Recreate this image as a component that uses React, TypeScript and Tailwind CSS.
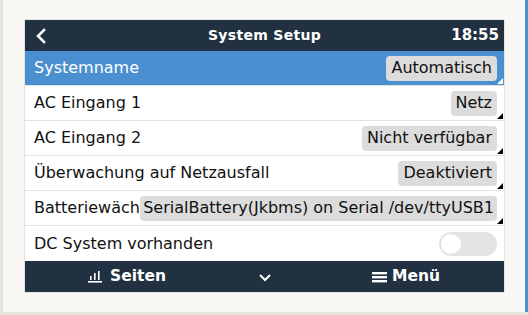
import React from 'react'

const font = { fontFamily: '"DejaVu Sans", "Liberation Sans", sans-serif' }

type Row = { label: string; value?: string; selected?: boolean; toggle?: boolean; clip?: boolean }

const rows: Row[] = [
  { label: 'Systemname', value: 'Automatisch', selected: true },
  { label: 'AC Eingang 1', value: 'Netz' },
  { label: 'AC Eingang 2', value: 'Nicht verfügbar' },
  { label: 'Überwachung auf Netzausfall', value: 'Deaktiviert' },
  { label: 'Batteriewächter', value: 'SerialBattery(Jkbms) on Serial /dev/ttyUSB1', clip: true },
  { label: 'DC System vorhanden', toggle: true },
]

function Corner({ white }: { white?: boolean }) {
  return (
    <svg className="absolute right-[1px] bottom-[1px]" width="6" height="6" viewBox="0 0 6 6">
      <polygon points="6,0 6,6 0,6" fill={white ? '#ffffff' : '#000000'} />
    </svg>
  )
}

function SettingRow({ row, last }: { row: Row; last: boolean }) {
  return (
    <div
      className={`relative h-[35px] flex items-center pl-[9px] pr-[7px] ${
        row.selected ? 'bg-[#4a8fd0] text-white' : 'bg-white text-[#111]'
      } ${last ? '' : 'border-b border-[#e2e2e2]'}`}
    >
      <div className={`text-[16px] whitespace-nowrap ${row.clip ? 'flex-1 min-w-0 overflow-hidden' : 'flex-1'}`}>
        {row.label}
      </div>
      {row.value && (
        <div
          className={`shrink-0 h-[25px] flex items-center rounded-[4px] bg-[#dcdcdc] text-[#111] text-[16px] whitespace-nowrap ${
            row.clip ? 'px-[3px]' : 'ml-[2px] px-[5px]'
          }`}
        >
          {row.value}
        </div>
      )}
      {row.toggle && (
        <div className="w-[58px] h-[24px] rounded-full bg-[#e3e3e3] flex items-center px-[2px]">
          <div className="w-[20px] h-[20px] rounded-full bg-white" />
        </div>
      )}
      {row.value && <Corner white={row.selected} />}
    </div>
  )
}

export default function App() {
  return (
    <div className="w-[528px] h-[315px] bg-[#e3e3df] flex flex-col" style={font}>
      <div className="flex h-[312px]">
        <div className="w-[3px]" />
        <div className="flex-1 bg-[#f8f7f3] rounded-bl-[3px] pt-[19px] pl-[21px]">
          <div className="w-[481px] border border-[#e4e4e2] bg-white">
            {/* header */}
            <div className="h-[31px] bg-[#223141] text-white flex items-center relative">
              <svg className="ml-[10px]" width="12" height="16" viewBox="0 0 12 16">
                <polyline points="9,2 3,8 9,14" fill="none" stroke="#fff" strokeWidth="2.6" strokeLinecap="square" />
              </svg>
              <div className="absolute left-0 right-0 text-center font-bold text-[14px] tracking-[0.3px]">System Setup</div>
              <div className="ml-auto mr-[5px] font-bold text-[15px]">18:55</div>
            </div>
            {rows.map((r, i) => (
              <SettingRow key={r.label} row={r} last={i === rows.length - 1} />
            ))}
            {/* footer */}
            <div className="h-[31px] bg-[#223141] text-white flex items-center font-bold text-[15.5px]">
              <div className="ml-[63px] flex items-center gap-[8px]">
                <svg width="14" height="13" viewBox="0 0 14 13">
                  <rect x="0" y="11" width="14" height="1.6" fill="#fff" />
                  <rect x="2" y="6" width="1.6" height="4" fill="#fff" />
                  <rect x="6" y="3" width="1.6" height="7" fill="#fff" />
                  <rect x="10" y="1" width="1.6" height="9" fill="#fff" />
                </svg>
                <span>Seiten</span>
              </div>
              <svg className="ml-[92px]" width="14" height="10" viewBox="0 0 14 10">
                <polyline points="2,3 7,8 12,3" fill="none" stroke="#fff" strokeWidth="2" />
              </svg>
              <div className="ml-[100px] flex items-center gap-[5px]">
                <svg width="15" height="12" viewBox="0 0 15 12">
                  <rect x="0" y="1" width="15" height="2.4" fill="#fff" />
                  <rect x="0" y="5" width="15" height="2.4" fill="#fff" />
                  <rect x="0" y="9" width="15" height="2.4" fill="#fff" />
                </svg>
                <span>Menü</span>
              </div>
            </div>
          </div>
        </div>
        <div className="w-[3px] bg-[#4a8fd0]" />
      </div>
    </div>
  )
}
